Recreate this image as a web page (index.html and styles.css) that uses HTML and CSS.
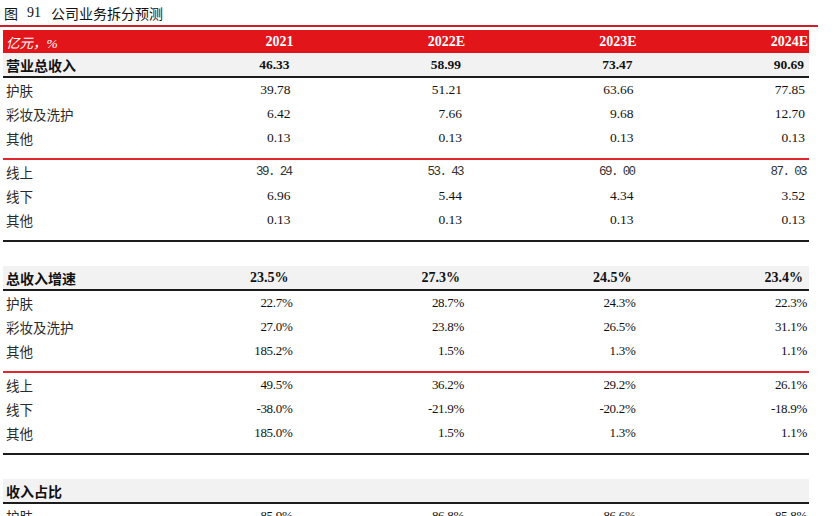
FILE: index.html
```html
<!DOCTYPE html>
<html lang="zh">
<head>
<meta charset="utf-8">
<link rel="stylesheet" href="styles.css">
</head>
<body>
<div class="title"><span class="t-fig">图</span><span class="t-num">91</span><span class="t-text">公司业务拆分预测</span></div>
<div class="title-rule"></div>
<div class="table">
  <div class="row head">
    <div class="lab unit">亿元，%</div>
    <div class="num">2021</div><div class="num">2022E</div><div class="num">2023E</div><div class="num">2024E</div>
  </div>

  <div class="row sub dec">
    <div class="lab">营业总收入</div>
    <div class="num">46.33</div><div class="num">58.99</div><div class="num">73.47</div><div class="num">90.69</div>
  </div>
  <div class="group red">
    <div class="row dec"><div class="lab">护肤</div><div class="num">39.78</div><div class="num">51.21</div><div class="num">63.66</div><div class="num">77.85</div></div>
    <div class="row dec"><div class="lab">彩妆及洗护</div><div class="num">6.42</div><div class="num">7.66</div><div class="num">9.68</div><div class="num">12.70</div></div>
    <div class="row dec"><div class="lab">其他</div><div class="num">0.13</div><div class="num">0.13</div><div class="num">0.13</div><div class="num">0.13</div></div>
  </div>
  <div class="group black">
    <div class="row mono"><div class="lab">线上</div><div class="num">39. 24</div><div class="num">53. 43</div><div class="num">69. 00</div><div class="num">87. 03</div></div>
    <div class="row dec"><div class="lab">线下</div><div class="num">6.96</div><div class="num">5.44</div><div class="num">4.34</div><div class="num">3.52</div></div>
    <div class="row dec"><div class="lab">其他</div><div class="num">0.13</div><div class="num">0.13</div><div class="num">0.13</div><div class="num">0.13</div></div>
  </div>

  <div class="blank"></div>

  <div class="row sub pct">
    <div class="lab">总收入增速</div>
    <div class="num">23.5%</div><div class="num">27.3%</div><div class="num">24.5%</div><div class="num">23.4%</div>
  </div>
  <div class="group red">
    <div class="row pct"><div class="lab">护肤</div><div class="num">22.7%</div><div class="num">28.7%</div><div class="num">24.3%</div><div class="num">22.3%</div></div>
    <div class="row pct"><div class="lab">彩妆及洗护</div><div class="num">27.0%</div><div class="num">23.8%</div><div class="num">26.5%</div><div class="num">31.1%</div></div>
    <div class="row pct"><div class="lab">其他</div><div class="num">185.2%</div><div class="num">1.5%</div><div class="num">1.3%</div><div class="num">1.1%</div></div>
  </div>
  <div class="group black">
    <div class="row pct"><div class="lab">线上</div><div class="num">49.5%</div><div class="num">36.2%</div><div class="num">29.2%</div><div class="num">26.1%</div></div>
    <div class="row pct"><div class="lab">线下</div><div class="num">-38.0%</div><div class="num">-21.9%</div><div class="num">-20.2%</div><div class="num">-18.9%</div></div>
    <div class="row pct"><div class="lab">其他</div><div class="num">185.0%</div><div class="num">1.5%</div><div class="num">1.3%</div><div class="num">1.1%</div></div>
  </div>

  <div class="blank"></div>

  <div class="row sub pct">
    <div class="lab">收入占比</div>
    <div class="num"></div><div class="num"></div><div class="num"></div><div class="num"></div>
  </div>
  <div class="group">
    <div class="row pct"><div class="lab">护肤</div><div class="num">85.9%</div><div class="num">86.8%</div><div class="num">86.6%</div><div class="num">85.8%</div></div>
  </div>
</div>
</body>
</html>
```

FILE: styles.css
```css
html, body {
  margin: 0;
  padding: 0;
  background: #ffffff;
}

body {
  font-family: "Liberation Serif", "Noto Sans CJK SC", serif;
  color: #111111;
  overflow: hidden;
}

.title {
  height: 25px;
  display: flex;
  align-items: center;
  padding-left: 4px;
  padding-top: 1px;
  box-sizing: border-box;
  font-size: 14px;
  color: #111111;
}

.t-fig, .t-text {
  font-family: "Noto Sans CJK SC", sans-serif;
}

.t-num {
  font-family: "Liberation Serif", serif;
  font-size: 14px;
  margin: 0 10px 0 9px;
}

.title-rule {
  width: 818px;
  height: 2px;
  background: #cf1f26;
  margin-bottom: 3px;
}

.table {
  margin-left: 3px;
  width: 806px;
}

.row {
  display: grid;
  grid-template-columns: 120px repeat(4, 1fr);
  align-items: center;
  height: 24px;
}

.lab {
  padding-left: 3px;
  font-family: "Noto Sans CJK SC", sans-serif;
  font-size: 13.5px;
  color: #2a2a2a;
  white-space: nowrap;
}

.num {
  text-align: right;
  white-space: nowrap;
}

.head {
  height: 23px;
  background: #e1151a;
  color: #ffffff;
}

.head .lab {
  font-family: "Liberation Serif", "Noto Sans CJK SC", serif;
  font-style: italic;
  color: #ffffff;
  font-size: 13.5px;
}

.head .num {
  font-weight: bold;
  font-size: 14px;
  padding-right: 1px;
}

.sub {
  height: 23px;
  background: #f2f2f2;
  border-bottom: 2px solid #1c1c1c;
}

.sub .lab {
  font-weight: bold;
  font-size: 14px;
  color: #111111;
}

.sub .num {
  font-weight: bold;
  font-size: 14px;
}

.dec .num {
  font-size: 13.5px;
  padding-right: 4px;
}

.sub.dec .num {
  padding-right: 5px;
}

.pct .num {
  font-size: 13px;
  letter-spacing: -0.3px;
  padding-right: 2px;
}

.sub.pct .num {
  font-size: 14px;
  letter-spacing: 0;
  padding-right: 6px;
}

.mono .num {
  font-family: "Liberation Mono", monospace;
  font-size: 12.5px;
  letter-spacing: -1.6px;
  color: #333333;
  padding-right: 3px;
}

.group {
  padding-bottom: 8px;
}

.group.red {
  border-bottom: 2px solid #e2262b;
}

.group.black {
  border-bottom: 2px solid #1c1c1c;
}

.blank {
  height: 24px;
}
```
